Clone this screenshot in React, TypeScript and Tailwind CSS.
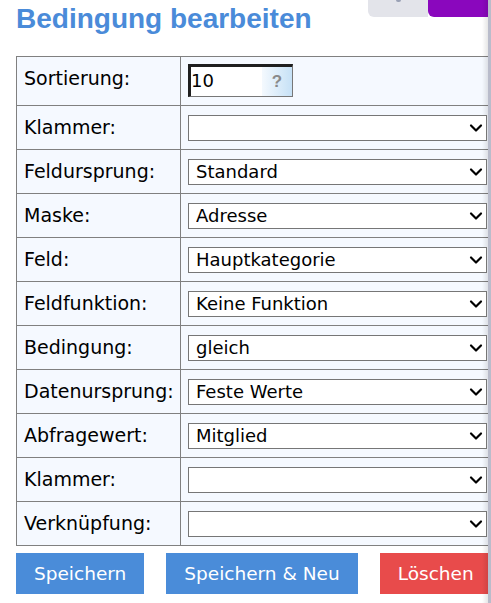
import { ChevronDown } from "lucide-react";

const rows: { label: string; value: string }[] = [
  { label: "Klammer:", value: "" },
  { label: "Feldursprung:", value: "Standard" },
  { label: "Maske:", value: "Adresse" },
  { label: "Feld:", value: "Hauptkategorie" },
  { label: "Feldfunktion:", value: "Keine Funktion" },
  { label: "Bedingung:", value: "gleich" },
  { label: "Datenursprung:", value: "Feste Werte" },
  { label: "Abfragewert:", value: "Mitglied" },
  { label: "Klammer:", value: "" },
  { label: "Verknüpfung:", value: "" },
];

const body = { fontFamily: '"DejaVu Sans", Verdana, sans-serif' };

function SelectBox({ value }: { value: string }) {
  return (
    <div className="relative w-[299px] h-[26px]">
      <select
        defaultValue={value}
        className="block appearance-none w-full h-full bg-white border border-[#767676] pl-[7px] pr-6 text-[18px] leading-[24px] text-black outline-none"
        style={body}
      >
        <option value={value}>{value}</option>
      </select>
      <ChevronDown
        size={20}
        strokeWidth={2.6}
        className="pointer-events-none absolute right-[1px] top-[3px] text-black"
      />
    </div>
  );
}

export default function App() {
  return (
    <div className="flex w-[491px] h-[603px] overflow-hidden bg-white">
      <div className="relative flex-1 overflow-hidden">
        {/* tabs peeking in at the top */}
        <div className="absolute top-0 left-[368px] flex h-[17px]">
          <div className="relative w-[60px] h-full bg-[#e3e4ea] rounded-bl-[6px]">
            <div className="absolute top-0 left-[28px] w-[5px] h-[2px] rounded-b bg-[#9aa1b5]" />
          </div>
          <div className="w-[70px] h-full bg-[#8a07bd] rounded-bl-[6px]" />
        </div>
        <div className="pointer-events-none absolute top-0 right-0 w-[6px] h-full bg-gradient-to-r from-transparent to-black/10" />

        <div className="pl-4">
          <h1
            className="h-[56px] pt-[3px] text-[28px] leading-[31px] font-bold text-[#4a8bd9]"
            style={{ fontFamily: '"Liberation Sans", Arial, sans-serif' }}
          >
            Bedingung bearbeiten
          </h1>

          <div className="w-[480px] border-t border-l border-[#808080] text-[19px] text-black" style={body}>
            <div className="flex h-[49px] border-b border-[#808080] bg-[#f5f9ff]">
              <div className="w-[164px] border-r border-[#808080] pl-[7px] pt-[7px]">Sortierung:</div>
              <div className="flex-1 pl-[7px] pt-[7px]">
                <div className="flex w-[105px] h-[33px] border-t-[3px] border-l-[3px] border-b border-r border-t-[#1f1f1f] border-l-[#1f1f1f] border-b-[#777] border-r-[#777] bg-white">
                  <span className="flex-1 text-[18px] leading-[28px]">10</span>
                  <span
                    className="flex w-[30px] items-center justify-center bg-gradient-to-r from-[#f4f9fe] to-[#c6e1f6] text-[17px] font-bold text-[#8a8a8a]"
                    style={{ fontFamily: '"Liberation Sans", Arial, sans-serif' }}
                  >
                    ?
                  </span>
                </div>
              </div>
            </div>
            {rows.map((r, i) => (
              <div key={i} className="flex h-[44px] items-center border-b border-[#808080] bg-[#f5f9ff]">
                <div className="flex h-full w-[164px] items-center border-r border-[#808080] pl-[7px]">{r.label}</div>
                <div className="flex-1 pl-[7px]">
                  <SelectBox value={r.value} />
                </div>
              </div>
            ))}
          </div>

          <div className="mt-[7px] flex gap-[22px] text-[18.5px] text-white whitespace-nowrap" style={body}>
            <button className="h-[41px] shrink-0 px-[18px] bg-[#4a8cd9]">Speichern</button>
            <button className="h-[41px] shrink-0 px-[18px] bg-[#4a8cd9]">Speichern &amp; Neu</button>
            <button className="h-[41px] shrink-0 px-[18px] bg-[#e84b4b]">Löschen</button>
          </div>
        </div>
      </div>
      <div className="w-[3px] h-full bg-[#b9bccb]" />
    </div>
  );
}
